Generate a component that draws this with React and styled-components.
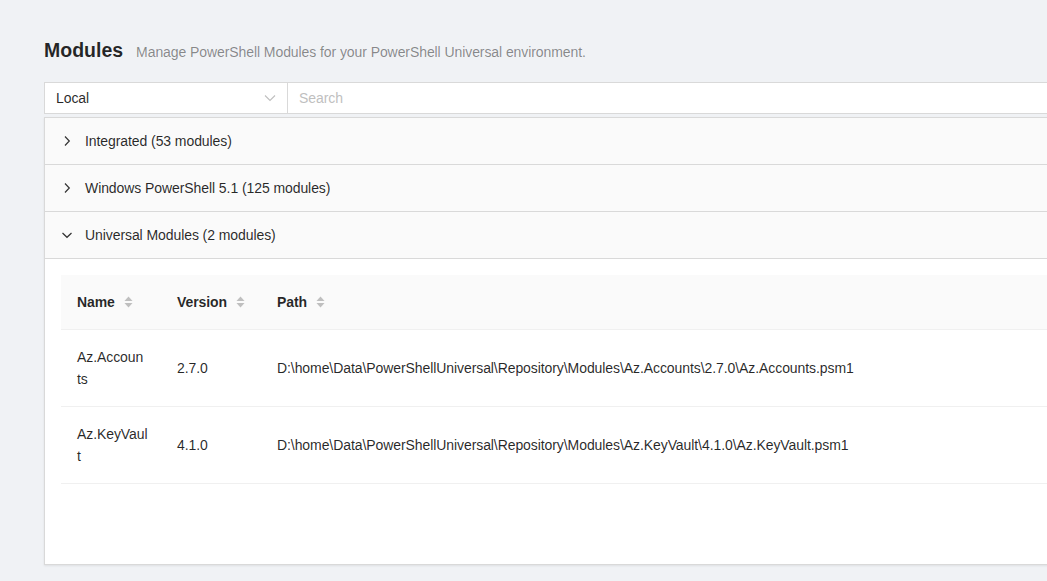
import styled, { createGlobalStyle } from 'styled-components'

const GlobalStyle = createGlobalStyle`
  html, body {
    margin: 0;
    background: #f0f2f5;
    overflow: hidden;
  }
  body {
    font-family: "Liberation Sans", Arial, sans-serif;
    font-size: 14px;
    letter-spacing: -0.08px;
    color: rgba(0, 0, 0, 0.85);
  }
`

const Page = styled.div`
  width: 1100px;
  padding: 36px 0 16px 44px;
  box-sizing: border-box;
`

const Header = styled.div`
  display: flex;
  align-items: baseline;
  gap: 13px;
  height: 28px;
  margin-bottom: 18px;
`

const Title = styled.h1`
  margin: 0;
  font-size: 19.5px;
  line-height: 28px;
  font-weight: 600;
  letter-spacing: 0;
  color: rgba(0, 0, 0, 0.85);
`

const SubTitle = styled.span`
  font-size: 14px;
  color: rgba(0, 0, 0, 0.45);
`

const InputGroup = styled.div`
  display: flex;
  height: 32px;
  margin-bottom: 3px;
`

const Select = styled.div`
  width: 243px;
  box-sizing: border-box;
  display: flex;
  align-items: center;
  justify-content: space-between;
  padding: 0 11px;
  background: #fff;
  border: 1px solid #d9d9d9;
  border-right: none;
`

const Search = styled.input`
  flex: 1;
  border: 1px solid #d9d9d9;
  border-right: none;
  padding: 0 11px;
  font: inherit;
  letter-spacing: inherit;
  outline: none;
  &::placeholder {
    color: #bfbfbf;
  }
`

const Collapse = styled.div`
  border: 1px solid #d9d9d9;
  border-right: none;
  background: #fafafa;
  box-shadow: 0 1px 2px rgba(0, 0, 0, 0.08);
`

const Panel = styled.div`
  border-bottom: 1px solid #d9d9d9;
  &:last-child {
    border-bottom: none;
  }
`

const PanelHeader = styled.div`
  display: flex;
  align-items: center;
  gap: 12px;
  padding: 12px 16px;
  line-height: 22px;
  color: rgba(0, 0, 0, 0.85);
  svg {
    flex: none;
  }
`

const PanelContent = styled.div`
  background: #fff;
  padding: 16px 0 80px 16px;
  border-top: 1px solid #d9d9d9;
`

const Table = styled.table`
  width: 100%;
  border-collapse: collapse;
  table-layout: fixed;
`

const Th = styled.th`
  box-sizing: border-box;
  width: ${p => p.$w || 'auto'};
  text-align: left;
  background: #fafafa;
  font-weight: 700;
  padding: 16px;
  line-height: 22px;
  border-bottom: 1px solid #f0f0f0;
  white-space: nowrap;
`

const Td = styled.td`
  padding: 16px;
  padding-right: ${p => (p.$tight ? '12px' : '16px')};
  line-height: 22px;
  border-bottom: 1px solid #f0f0f0;
  overflow-wrap: anywhere;
  vertical-align: middle;
`

const SortWrap = styled.span`
  display: inline-flex;
  align-items: center;
  gap: 9px;
`

const Chevron = ({ open }) => (
  <svg width="12" height="12" viewBox="0 0 12 12" fill="none" stroke="#333" strokeWidth="1.2">
    {open ? <path d="M1.5 4 L6 8.3 L10.5 4" /> : <path d="M4 1.5 L8.3 6 L4 10.5" />}
  </svg>
)

const SortIcon = () => (
  <svg width="9" height="14" viewBox="0 0 9 14" fill="#bfbfbf">
    <path d="M4.5 1.5 L8.5 6 L0.5 6 Z" />
    <path d="M4.5 12.5 L8.5 8 L0.5 8 Z" />
  </svg>
)

const panels = [
  { label: 'Integrated (53 modules)' },
  { label: 'Windows PowerShell 5.1 (125 modules)' },
  { label: 'Universal Modules (2 modules)', open: true },
]

// name is split where the narrow column wraps it
const modules = [
  { name: ['Az.Accoun', 'ts'], version: '2.7.0', path: 'D:\\home\\Data\\PowerShellUniversal\\Repository\\Modules\\Az.Accounts\\2.7.0\\Az.Accounts.psm1' },
  { name: ['Az.KeyVaul', 't'], version: '4.1.0', path: 'D:\\home\\Data\\PowerShellUniversal\\Repository\\Modules\\Az.KeyVault\\4.1.0\\Az.KeyVault.psm1' },
]

export default function App() {
  return (
    <Page>
      <GlobalStyle />
      <Header>
        <Title>Modules</Title>
        <SubTitle>Manage PowerShell Modules for your PowerShell Universal environment.</SubTitle>
      </Header>
      <InputGroup>
        <Select>
          <span>Local</span>
          <svg width="12" height="8" viewBox="0 0 12 8" fill="none" stroke="#bfbfbf" strokeWidth="1.1">
            <path d="M1 1.5 L6 6.5 L11 1.5" />
          </svg>
        </Select>
        <Search placeholder="Search" />
      </InputGroup>
      <Collapse>
        {panels.map(p => (
          <Panel key={p.label}>
            <PanelHeader>
              <Chevron open={p.open} />
              {p.label}
            </PanelHeader>
            {p.open && (
              <PanelContent>
                <Table>
                  <thead>
                    <tr>
                      <Th $w="100px"><SortWrap>Name<SortIcon /></SortWrap></Th>
                      <Th $w="100px"><SortWrap>Version<SortIcon /></SortWrap></Th>
                      <Th><SortWrap>Path<SortIcon /></SortWrap></Th>
                    </tr>
                  </thead>
                  <tbody>
                    {modules.map(m => (
                      <tr key={m.path}>
                        <Td $tight>{m.name[0]}<wbr />{m.name[1]}</Td>
                        <Td>{m.version}</Td>
                        <Td>{m.path}</Td>
                      </tr>
                    ))}
                  </tbody>
                </Table>
              </PanelContent>
            )}
          </Panel>
        ))}
      </Collapse>
    </Page>
  )
}
